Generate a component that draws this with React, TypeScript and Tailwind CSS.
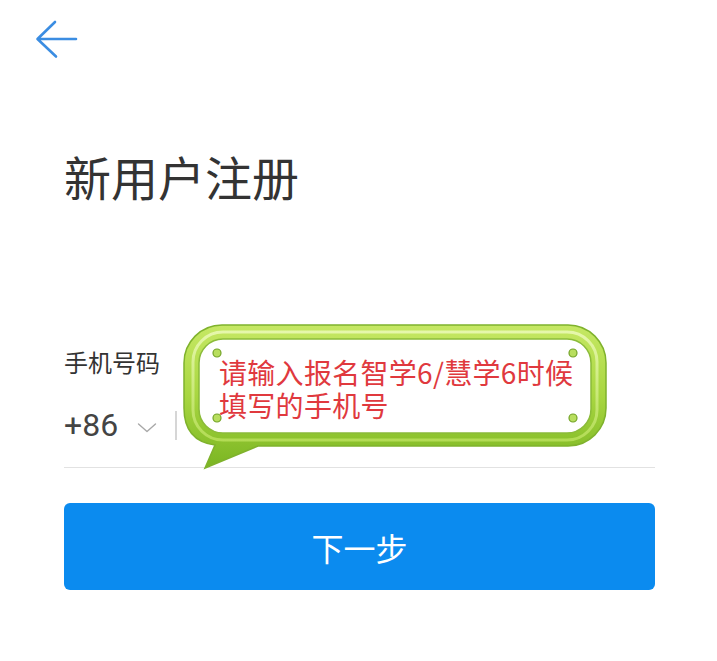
import { FC } from 'react'

const BackArrow: FC = () => (
  <svg width="48" height="44" viewBox="0 0 48 44" fill="none">
    <path d="M44 23H6M23 6L5.5 23L24 40.5" stroke="#3b8de2" strokeWidth="2.6" strokeLinecap="round" strokeLinejoin="round" />
  </svg>
)

const Chevron: FC = () => (
  <svg width="20" height="12" viewBox="0 0 20 12" fill="none">
    <path d="M1.5 2L10 9.5L18.5 2" stroke="#a8a8a8" strokeWidth="1.4" strokeLinecap="round" strokeLinejoin="round" />
  </svg>
)

// green speech bubble pasted over the form
const TipBubble: FC = () => (
  <div className="absolute left-[180px] top-[320px] w-[430px] h-[152px]">
    <svg width="430" height="152" viewBox="0 0 430 152" className="absolute left-0 top-0">
      <defs>
        <linearGradient id="band" x1="0" y1="0" x2="0" y2="1">
          <stop offset="0" stopColor="#c6e864" />
          <stop offset="0.5" stopColor="#a8d640" />
          <stop offset="1" stopColor="#7ab522" />
        </linearGradient>
        <linearGradient id="shine" x1="0" y1="0" x2="0" y2="1">
          <stop offset="0" stopColor="#eefbbd" />
          <stop offset="1" stopColor="#bce25e" />
        </linearGradient>
      </defs>
      <path
        d="M42 5H388A38 38 0 0 1 426 43V88A38 38 0 0 1 388 126H78L25 148L35 125Q4 121 4 88V43A38 38 0 0 1 42 5Z"
        fill="url(#band)"
        stroke="#7fb22c"
        strokeWidth="1.5"
      />
      <rect x="13" y="12" width="404" height="108" rx="30" fill="none" stroke="url(#shine)" strokeWidth="3" opacity="0.8" />
      <rect x="19" y="19" width="392" height="94" rx="24" fill="#ffffff" stroke="#8bbb3a" strokeWidth="1.5" />
      {[
        [37, 33],
        [393, 33],
        [37, 98],
        [393, 98],
      ].map(([cx, cy]) => (
        <circle key={`${cx}-${cy}`} cx={cx} cy={cy} r="4" fill="#b8de5e" stroke="#73a328" strokeWidth="1.2" />
      ))}
    </svg>
    <div className="absolute left-[39px] top-[36px] text-[28px] leading-[33px] tracking-[0.3px] text-[#e0393e] whitespace-nowrap">
      <div>请输入报名智学6/慧学6时候</div>
      <div>填写的手机号</div>
    </div>
  </div>
)

export default function App() {
  return (
    <div className="relative w-full h-[661px] bg-white font-['Noto_Sans_CJK_SC','Noto_Sans',sans-serif] overflow-hidden">
      <div className="h-[60px] pt-[16px] pl-[32px]">
        <BackArrow />
      </div>
      <div className="pl-[64px] pr-[62px]">
        <h1 className="mt-[92px] text-[47px] leading-[47px] text-[#333333] font-normal">新用户注册</h1>
        <div className="mt-[151px] text-[24px] leading-[24px] text-[#333333]">手机号码</div>
        <div className="mt-[31px] h-[40px] flex items-center">
          <span className="font-['Roboto',sans-serif] text-[32px] leading-[32px] text-[#444444]">+86</span>
          <span className="ml-[19px] mt-[6px] flex">
            <Chevron />
          </span>
          <span className="ml-[18px] w-[2px] h-[29px] bg-[#d6d6d6]" />
        </div>
        <div className="mt-[22px] h-px bg-[#e2e2e2]" />
        <button className="mt-[35px] w-full h-[87px] rounded-[6px] bg-[#0b8bef] text-white text-[32px] leading-[32px] flex items-center justify-center">
          下一步
        </button>
      </div>
      <TipBubble />
    </div>
  )
}
